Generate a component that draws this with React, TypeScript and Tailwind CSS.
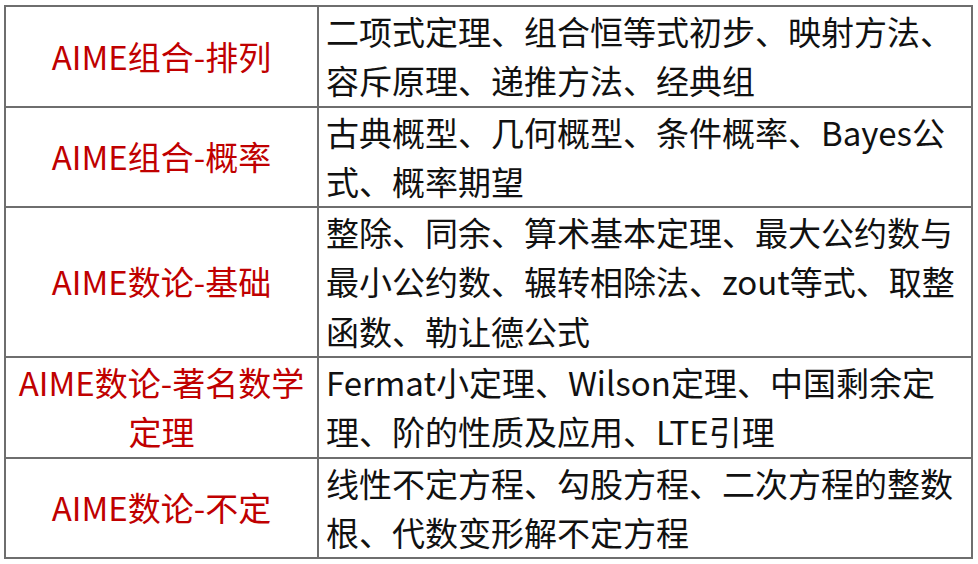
import React from "react";

type Row = { topic: string[]; detail: string[] };

// each array entry is one line, matching the breaks in the source table
const rows: Row[] = [
  {
    topic: ["AIME组合-排列"],
    detail: ["二项式定理、组合恒等式初步、映射方法、", "容斥原理、递推方法、经典组"],
  },
  {
    topic: ["AIME组合-概率"],
    detail: ["古典概型、几何概型、条件概率、Bayes公", "式、概率期望"],
  },
  {
    topic: ["AIME数论-基础"],
    detail: [
      "整除、同余、算术基本定理、最大公约数与",
      "最小公约数、辗转相除法、zout等式、取整",
      "函数、勒让德公式",
    ],
  },
  {
    topic: ["AIME数论-著名数学", "定理"],
    detail: ["Fermat小定理、Wilson定理、中国剩余定", "理、阶的性质及应用、LTE引理"],
  },
  {
    topic: ["AIME数论-不定"],
    detail: ["线性不定方程、勾股方程、二次方程的整数", "根、代数变形解不定方程"],
  },
];

export default function App() {
  return (
    <div className="min-h-screen w-full bg-white pt-[5px] pl-[4px]">
      <div
        className="grid w-[969px] grid-cols-[313px_1fr] border-t-2 border-l-2 border-[#6e6e6e] text-[33px] leading-[49.3px]"
        style={{ fontFamily: '"Noto Sans CJK SC", "Noto Sans", sans-serif' }}
      >
        {rows.map((row, i) => (
          <React.Fragment key={i}>
            <div className="flex flex-col items-center justify-center border-r-2 border-b-2 border-[#6e6e6e] text-center text-[#c00000]">
              {row.topic.map((t, j) => (
                <span key={j} className="whitespace-nowrap">
                  {t}
                </span>
              ))}
            </div>
            <div className="flex flex-col border-r-2 border-b-2 border-[#6e6e6e] pl-[7px] text-[#111111]">
              {row.detail.map((t, j) => (
                <span key={j} className="whitespace-nowrap">
                  {t}
                </span>
              ))}
            </div>
          </React.Fragment>
        ))}
      </div>
    </div>
  );
}
